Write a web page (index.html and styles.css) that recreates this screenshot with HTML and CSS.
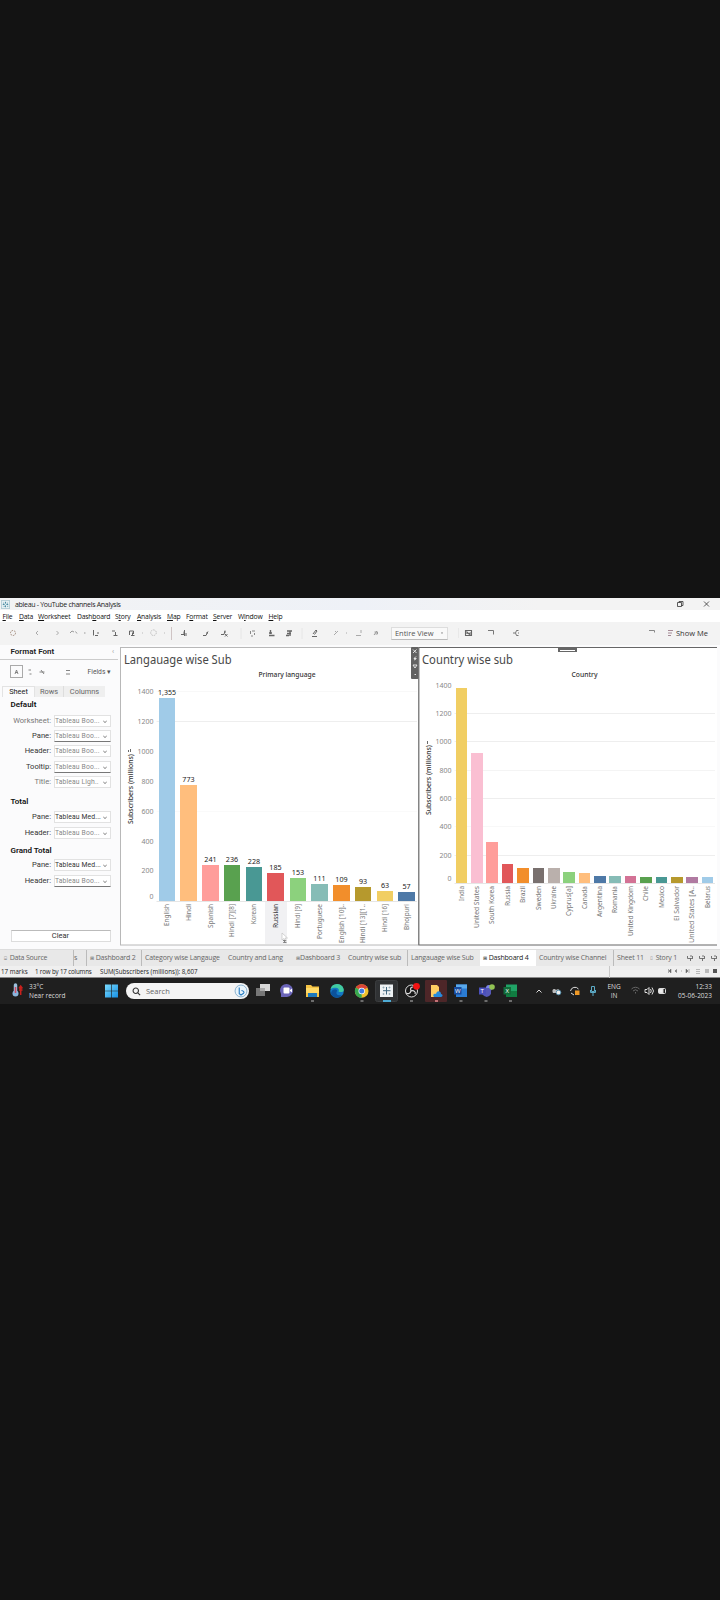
FILE: index.html
```html
<!DOCTYPE html>
<html lang="en">
<head>
<meta charset="utf-8">
<title>Tableau - YouTube channels Analysis</title>
<link rel="stylesheet" href="styles.css">
</head>
<body>
<main class="screen">
  <header class="titlebar">
    <svg class="logo" viewBox="0 0 10 10"><rect x=".5" y=".5" width="9" height="9" fill="#e6f0f3" stroke="#b4cdd5"/><path d="M5 2v2M5 6v2M2 5h2M6 5h2M3 3v1M7 3v1M3 7h1M7 7h1" stroke="#357f98"/></svg>
    <span class="app-name">ableau - YouTube channels Analysis</span>
    <svg class="window-buttons" viewBox="660 598 60 12" fill="none" stroke="#333" stroke-width=".8"><path d="M677.5 602.5h4v4h-4zM679 602.5v-1h4v4h-1.500M704 601.500l5 5M709 601.500l-5 5"/></svg>
  </header>
  <nav class="menu">
    <span><u>F</u>ile</span><span><u>D</u>ata</span><span><u>W</u>orksheet</span><span>Dash<u>b</u>oard</span><span>S<u>t</u>ory</span><span><u>A</u>nalysis</span><span><u>M</u>ap</span><span>F<u>o</u>rmat</span><span><u>S</u>erver</span><span>W<u>i</u>ndow</span><span><u>H</u>elp</span>
  </nav>
  <div class="toolbar">
    <svg class="tools" viewBox="0 622 391 23" fill="none" stroke="#666" stroke-width="1">
      <g stroke="#a08878" stroke-dasharray="1.500 1"><circle cx="13" cy="633" r="2.500"/></g>
      <path stroke="#aaa" d="M38 631l-2 2 2 2M56.500 631l2 2-2 2"/>
      <path stroke="#999" d="M70 633l2-2 2 1M75.500 631.500l1.500 2M84 633h1.500"/>
      <path d="M93.500 630v5.500M95 635.500h3M98 632v2M112 631h3M115.500 632v3M113.500 635.500h4M129.500 635v-4h4v3M131 635.500h3.500M132.500 632.500v2.500"/>
      <g stroke="#bbb" stroke-dasharray="1.500 1"><circle cx="153.500" cy="632.700" r="2.800"/></g>
      <path stroke="#bbb" d="M142 633h1M164 633h1"/>
      <path stroke="#cfc4c4" d="M171.500 627v13"/>
      <path d="M181 634.500h3v-3M184.500 630v6M186 633v3M203 635.500h3l2-4M206 633h2M221 634.500h3l1-4M225 631v2M225 634l2.500 2.500M227.500 634l-2.500 2.500"/>
      <path stroke="#888" d="M250.500 631v3M252 631h3M254.500 633v2M251 636h2"/>
      <path stroke-width="1.400" d="M269 635.500h5.500M269 633h3M270.500 630v4M287 631h5M287 633.500h4M286 635.500h3M290 631v5"/>
      <path stroke="#e6e6e6" d="M241 628v11M302 628v11"/>
      <path d="M313 634l3-4 1 1-2.500 3.500M312 636.500h5"/>
      <path stroke="#aaa" d="M334 635l4-4M335 631l2 2M346 633h1M361 630v3M356 635.500h5"/>
      <path stroke="#999" d="M374 635l3-4M374.500 632h3v2h-2"/>
    </svg>
    <span class="view-select">Entire View<svg viewBox="0 0 4 3"><path d="M1 .5h2L2 2z" fill="#777"/></svg></span>
    <svg class="tools-end" viewBox="449 622 80 23" fill="none" stroke="#666"><path stroke="#e8e8e8" d="M458.500 628v10"/><path d="M465.500 630.500h6v5h-6zM467 634v-2l2 2 1-1v2" stroke-width="1.100"/><path stroke="#777" d="M488 630.500h5.500v4"/><path d="M513 633h2M518.500 630.500h-2l-1 2.500 1 2.500h2M518 633h1" stroke-width=".9"/></svg>
    <svg class="showme-icons" viewBox="645 622 30 23" fill="none" stroke="#888"><path d="M649 630.500h5.500v2"/><path stroke="#a58a96" d="M668 630.500h5M668 633h4M668 635.500h3"/></svg>
    <span class="showme">Show Me</span>
  </div>
  <section class="workspace">
    <aside class="format">
      <h2><span>Format Font</span><i>‹</i></h2>
      <div class="font-tools">
        <svg viewBox="0 660 80 26" fill="none" stroke="#777"><rect x="10.500" y="665.500" width="12" height="12" stroke="#aaa"/><path d="M15 674l1.500-4 1.500 4M15.500 672.500h2M28.500 670h2.500M29.500 674h2M39.500 672h5M41 670l3 4M66 670.500h4M66 674h4" stroke-width=".9"/></svg>
        <span>Fields ▾</span>
      </div>
      <div class="pane-tabs"><b>Sheet</b><span>Rows</span><span>Columns</span></div>
      <div class="group first"><h3>Default</h3>
        <label class="pale">Worksheet:<em>Tableau Boo...</em></label>
        <label class="lined">Pane:<em>Tableau Boo...</em></label>
        <label>Header:<em>Tableau Boo...</em></label>
        <label class="lined">Tooltip:<em>Tableau Boo...</em></label>
        <label class="pale">Title:<em>Tableau Ligh..</em></label>
      </div>
      <div class="group total"><h3>Total</h3>
        <label class="set">Pane:<em>Tableau Med...</em></label>
        <label>Header:<em>Tableau Boo...</em></label>
      </div>
      <div class="group grand"><h3>Grand Total</h3>
        <label class="set">Pane:<em>Tableau Med...</em></label>
        <label class="lined">Header:<em>Tableau Boo...</em></label>
      </div>
      <button class="clear">Clear</button>
    </aside>
    <svg class="chart language" id="language" viewBox="119 645 299 303"></svg>
    <svg class="chart country" id="country" viewBox="418 645 302 303"></svg>
    <svg class="handle" viewBox="0 0 8 32" fill="none" stroke="#eee" stroke-width=".9"><rect width="7.500" height="32" rx="1" fill="#626262" stroke="none"/><path d="M2 2.500l3.500 3.500M5.500 2.500L2 6M5 9.500l-2 2h2.500M3 13l2-1M2 18h4l-2 3zM3.500 27.500h1.500"/></svg>
  </section>
  <nav class="sheets">
    <span class="t1"><i>⌸</i> Data Source</span><span class="t2">s</span><span class="t3"><i>⊞</i> Dashboard 2</span><span class="t4">Category wise Langauge</span><span class="t5">Country and Lang</span><span class="t6"><i>⊞</i>Dashboard 3</span><span class="t7">Country wise sub</span><span class="t8">Langauage wise Sub</span><span class="t9"><i>⊞</i> Dashboard 4</span><span class="t10">Country wise Channel</span><span class="t11">Sheet 11</span><span class="t12"><i>⌷</i> Story 1</span>
    <svg viewBox="684 949 36 17" fill="none" stroke="#666"><path d="M687.500 955v2.500h4.500M690 955h2M690.500 957v3M692.500 955v3M699.500 955v2.500h4.500M702 955h2M702.500 957v3M704.500 955v3M711.500 955v2.500h4.500M714 955h2M714.500 957v3M716.500 955v3" stroke-width=".9"/></svg>
  </nav>
  <div class="status">
    <span>17 marks</span><span>1 row by 17 columns</span><span>SUM(Subscribers (millions)): 8,607</span>
    <svg viewBox="608 966 112 12"><path d="M609.500 966v12" stroke="#c8c8c8"/><path d="M668.500 969v4M671 969v4l-2-2zM676.500 969.500v3l-1.500-1.500zM681 971h1M686 969v4l2-2zM689 969v4" fill="#666" stroke="#666" stroke-width=".5"/><path d="M696 969.500h4M696 971.500h4M696 973.500h4" stroke="#aaa" stroke-width=".8"/><path d="M705 969h4v4h-4z" fill="#bbb"/><path d="M713 969h4v4h-4z" fill="#555"/></svg>
  </div>
  <footer class="taskbar">
    <svg class="weather-icon" viewBox="0 978 28 26"><path d="M15.500 985v8" stroke="#9dc0dd" stroke-width="3.500" stroke-linecap="round"/><circle cx="15.500" cy="993.500" r="3" fill="#8ab4dc"/><path d="M15.500 987v6" stroke="#d24b62" stroke-width="1.500"/><path d="M20.700 995v-8M19 988.500l1.700-2.500 1.700 2.500M19 990h3.500" stroke="#c9201c" stroke-width="1.500" fill="none"/></svg>
    <div class="weather"><span>33°C</span><span>Near record</span></div>
    <svg class="start" viewBox="0 0 14 14"><defs><linearGradient id="win" x2="1" y2="1"><stop stop-color="#7bdcff"/><stop offset="1" stop-color="#1690e4"/></linearGradient></defs><path d="M0 0h6.600v6.600H0zM7.300 0h6.700v6.600H7.300zM0 7.300h6.600V14H0zM7.300 7.300H14V14H7.300z" fill="url(#win)"/></svg>
    <div class="search"><svg viewBox="0 0 10 10" fill="none" stroke="#333" stroke-width="1.200"><circle cx="4.200" cy="4.200" r="3"/><path d="M6.500 6.500L9 9"/></svg><span>Search</span>
      <svg class="bing" viewBox="0 0 16 16"><circle cx="8" cy="8" r="6.800" fill="#e9f4fb" stroke="#7da9c9"/><path d="M6 4v7l2 1.500 3-2c1-1 0-2.500-2.500-3" fill="none" stroke="#2b7fc4" stroke-width="1.300"/></svg></div>
    <svg class="apps" viewBox="250 978 278 26">
      <path d="M260 984h10v7h-10z" fill="#d8d8d8"/><path d="M256 988h9v8h-9z" fill="#777"/><path d="M260 988h5v3h-5z" fill="#aaa"/>
      <path d="M281 997v-3a6.500 6.500 0 1 1 6 3z" fill="#6a64b8"/><rect x="283.500" y="987.500" width="6" height="6" rx="1" fill="#fff"/><path d="M290 990l2-1.500v4l-2-1.500z" fill="#fff"/>
      <path d="M306 985h5l1.500 1.500h6.500V997h-13z" fill="#f5c344"/><path d="M306 988h13v5h-13z" fill="#ffda68"/><path d="M308 993h9v4h-9z" fill="#1b78bd"/>
      <circle cx="337" cy="991" r="6.800" fill="#1479c5"/><path d="M330.500 989a6.800 6.800 0 0 1 13-.5c1.500 4-3 4-5 3 2-4-4-5-8-2.500z" fill="#42cba0"/><path d="M331 993c1-5 7-4 6-2-2 4 2 5 5 4-4 5-11 2-11-2z" fill="#0c529b"/>
      <circle cx="361.700" cy="991" r="6.800" fill="#efc12e"/><path d="M361.700 991l-5.900-3.400a6.800 6.800 0 0 1 11.800 0z" fill="#d94436"/><path d="M361.700 991l0 6.800a6.800 6.800 0 0 1-5.900-10.200z" fill="#36a852"/><circle cx="361.700" cy="991" r="3.200" fill="#fff"/><circle cx="361.700" cy="991" r="2.500" fill="#3e7be0"/>
      <rect x="375.500" y="980.500" width="22" height="21" rx="2" fill="#303234" stroke="#3b3d3f"/><path d="M380 984.500h13v12.500h-13z" fill="#eef2f4"/><path d="M386.500 987v7.500M383 990.700h7.500" stroke="#406880" stroke-width="1"/><path d="M383.500 986.500v2M382.500 987.500h2M389.500 986.500v2M388.500 987.500h2M383.500 993v2M382.500 994h2M389.500 993v2M388.500 994h2" stroke="#8ba3b0" stroke-width=".7"/>
      <circle cx="411.500" cy="991" r="6" fill="#181818" stroke="#ddd"/><path d="M411 991c-1-3 0-4 2-4M411 991c3-1 5 1 4 3M411 991c-1 3-3 3-5 2" stroke="#ddd" fill="none" stroke-width="1.200"/><circle cx="416.500" cy="986.300" r="3.400" fill="#f31313"/>
      <rect x="425" y="980" width="22" height="22" rx="1" fill="#4d2628"/><path d="M431 985h6l2 2v10h-8z" fill="#ffce62"/><path d="M434 997c-2-3 1-4 2-3 1-4 5-3 5 0 2 0 2 3 0 3z" fill="#268bdd"/>
      <path d="M456 984.500h11V997h-11z" fill="#2b7cd3"/><path d="M456 984.500h11v4h-11z" fill="#58a9ec"/><rect x="454" y="987" width="7.500" height="7.500" fill="#174b9e"/><text x="455" y="993" font-size="6" fill="#fff" font-family="Open Sans">W</text>
      <circle cx="489" cy="988" r="3" fill="#7b83eb"/><path d="M482 988h9v6q-4 6-9 0z" fill="#5558b7"/><rect x="479" y="987.500" width="7" height="7" fill="#4b50bd"/><text x="480.500" y="993.200" font-size="6" fill="#fff" font-family="Open Sans">T</text><circle cx="492" cy="987" r="2.800" fill="#92c353"/>
      <path d="M506 984.500h11V997h-11z" fill="#20a366"/><path d="M506 991h11v6h-11z" fill="#107c41"/><rect x="503.500" y="987" width="7.500" height="7.500" fill="#116d3a"/><text x="505.500" y="993" font-size="6" fill="#fff" font-family="Open Sans">X</text>
      <path d="M311 1001h3M360.500 1001h3M410 1001h3M459.500 1001h3M484.500 1001h3M509 1001h3" stroke="#888" stroke-width="1.500"/><path d="M383 1001h8" stroke="#52b9e8" stroke-width="1.800"/><path d="M435 1001h3" stroke="#eb8b90" stroke-width="1.500"/>
    </svg>
    <svg class="tray" viewBox="528 978 76 26" fill="none" stroke="#ddd" stroke-width="1"><path d="M536.500 992.500l2.500-2.500 2.500 2.500"/><path d="M553 993c-2-4 2-5 3-3 2-2 5 0 4 3z" fill="#bbb" stroke="none"/><circle cx="558.500" cy="992.500" r="2.300" fill="#eee" stroke="#578fac"/><path d="M570.500 991a4.500 4.500 0 0 1 8-2M571 993l3 2"/><rect x="575" y="990.500" width="4.500" height="4.500" fill="#ee9927" stroke="none"/><path d="M591.500 986.500h3v5h-3zM590.500 990v2.500h5V990M593 993v3" stroke="#5cabc6"/></svg>
    <div class="lang"><span>ENG</span><span>IN</span></div>
    <svg class="system" viewBox="628 978 44 26" fill="none" stroke="#ddd"><path stroke="#666" d="M631.500 989a5.500 5.500 0 0 1 8 0M633 991a3.500 3.500 0 0 1 5 0M635.500 993.500v-1.500"/><path d="M645 989.500h2l2-2v7l-2-2h-2zM650.500 989q1.500 2 0 4M652 987.500q3 3.500 0 7"/><rect x="658.500" y="988.500" width="7" height="5" rx="1"/><path d="M659 989h4v4h-4z" fill="#eee"/></svg>
    <div class="clock"><span>12:33</span><span>05-06-2023</span></div>
  </footer>
</main>
<script src="charts.js"></script>
</body>
</html>
```
FILE: styles.css
```css
* { box-sizing: border-box; }
body { margin: 0; background: #131313; font-family: "Open Sans", sans-serif; font-size: 7px; color: #222; }
.screen { width: 720px; height: 1600px; padding-top: 598px; display: flex; flex-direction: column; overflow: hidden; white-space: nowrap; }
.screen > * { flex: none; }
svg { display: block; flex: none; }

.titlebar { height: 12px; display: flex; align-items: center; background: linear-gradient(90deg, #f2f3f4, #eef1f7 50%, #f3f3f3 75%); padding-left: 1px; }
.logo { width: 9px; height: 9px; }
.app-name { margin-left: 5px; font-size: 7px; letter-spacing: -.3px; }
.window-buttons { width: 60px; height: 12px; margin-left: auto; }

.menu { height: 12px; background: #fff; display: grid; grid-template-columns: 16.500px 19px 39px 38px 22px 30px 19px 27px 25px 30.500px 20px; padding: 1px 0 0 2.500px; align-items: center; line-height: 12px; font-size: 6.800px; letter-spacing: -.2px; color: #111; }
.menu u { text-underline-offset: 1px; text-decoration-thickness: .5px; }

.toolbar { height: 23px; background: #f3f3f3; display: flex; align-items: center; }
.tools { width: 391px; height: 23px; }
.view-select { width: 57px; height: 13px; line-height: 10px; margin-bottom: 1px; border: 1px solid #ddd; border-bottom-color: #bbb; background: #f9f9f9; padding: 0 3px; display: flex; align-items: center; justify-content: space-between; font-size: 7.500px; color: #555; letter-spacing: -.05px; }
.view-select svg { width: 4px; height: 3px; }
.tools-end { width: 80px; height: 23px; margin-left: 1px; }
.showme-icons { width: 30px; height: 23px; margin-left: auto; }
.showme { width: 45px; font-size: 7.500px; color: #333; padding: 0 0 2px 1px; }

.workspace { height: 304px; display: flex; background: #fbfbfc; position: relative; }
.format { width: 119px; height: 304px; display: flex; flex-direction: column; font-family: Roboto, sans-serif; font-size: 7.600px; }
.format h2 { margin: 0; height: 15px; border-bottom: 1px solid #ccc; padding: 0 4px 0 10.500px; display: flex; justify-content: space-between; align-items: center; font-size: 8px; line-height: 14px; font-weight: 600; width: 118px; }
.format h2 i { font-style: normal; font-weight: 400; font-size: 7px; color: #999; }
.font-tools { height: 26px; display: flex; justify-content: space-between; padding-right: 8px; line-height: 24px; color: #555; font-size: 6.700px; }
.font-tools svg { width: 80px; height: 26px; }
.pane-tabs { height: 11px; display: flex; margin-left: 2px; color: #666; line-height: 11px; font-size: 7.400px; text-align: center; }
.pane-tabs b { width: 33px; font-weight: 400; color: #222; border: 1px solid #e3e3e3; border-bottom: 0; line-height: 9px; }
.pane-tabs span { width: 29px; background: #efefef; border-right: 1px solid #ddd; }
.pane-tabs span + span { width: 41px; border: 0; }
.format h3 { margin: 0 0 0 10.500px; font-size: 8px; line-height: 10px; height: 10px; font-weight: 600; color: #111; }
.group.first { margin-top: 3px; }
.group label:first-of-type { margin-top: 2px; }
.group.first label:first-of-type { margin-top: 3px; }
.group label { height: 15.400px; display: grid; grid-template-columns: 51px 57px; column-gap: 3px; align-items: center; text-align: right; color: #333; line-height: 10px; }
.group label em { height: 12px; border: 1px solid #e2e2e2; background: #fff; text-align: left; font-style: normal; color: #888; font-size: 6.800px; line-height: 11px; display: flex; justify-content: space-between; padding: 0 3px 0 0; letter-spacing: .12px; }
.group label em::after { content: ""; width: 3px; height: 3px; border: solid #888; border-width: 0 .7px .7px 0; transform: rotate(45deg) scale(.7); margin-top: 3px; }
.group .lined em { border-bottom-color: #777; }
.group .set em { color: #333; }
.group .pale { color: #777; }
.total { margin-top: 7.500px; }
.grand { margin-top: 5.500px; }
.clear { margin: 41.500px 0 0 10.500px; width: 100px; height: 12px; border: 1px solid #ddd; border-top-color: #bbb; background: #fff; padding: 0; font: 7.500px/10px Roboto, sans-serif; color: #333; }
.chart { height: 303px; font-family: "Noto Sans", sans-serif; }
.language { width: 299px; }
.country { width: 302px; }
.handle { position: absolute; left: 411px; top: 2px; width: 8px; height: 32px; }
.chart .title { font-size: 12px; fill: #484848; font-weight: 400; }
.chart .field { font-size: 6.800px; fill: #333; font-weight: 500; }
.chart .axis { font-size: 7px; fill: #888; }
.chart .member { font-size: 7px; fill: #777; }
.chart .mark { font-size: 7px; fill: #222; }

.sheets { height: 17px; display: flex; background: #e8e8e8; line-height: 17px; color: #666; font-size: 7px; letter-spacing: -.18px; border-top: 1px solid #ddd; }
.sheets span { flex: none; height: 16px; line-height: 16px; overflow: hidden; }
.sheets i { display: inline-block; width: 4px; font: 5px/8px "DejaVu Sans", sans-serif; }
.t1 { width: 73px; padding-left: 4px; }
.t2 { width: 13px; border-left: 1px solid #bbb; }
.t3 { width: 55px; border-left: 1px solid #bbb; padding-left: 3px; }
.t4 { width: 84px; border-left: 1px solid #bbb; padding-left: 3px; }
.t5 { width: 70px; padding-left: 3px; }
.t6 { width: 50px; padding-left: 1px; }
.t7 { width: 62px; padding-left: 3px; }
.t8 { width: 73px; border-left: 1px solid #bbb; padding-left: 3px; }
.t9 { width: 56px; background: #fff; color: #222; padding-left: 3px; }
.t10 { width: 77px; padding-left: 3px; }
.t11 { width: 35px; border-left: 1px solid #bbb; padding-left: 3px; }
.t12 { width: 36px; padding-left: 2px; }
.sheets svg { width: 36px; height: 17px; }
.status { height: 12px; display: flex; background: #efefef; color: #222; font-size: 6.200px; line-height: 11px; border-bottom: 1px solid #888; }
.status span:first-child { padding-left: 1px; width: 35px; }
.status span:nth-child(2) { width: 65px; letter-spacing: -.15px; }
.status svg { width: 112px; height: 12px; margin-left: auto; }

.taskbar { height: 26px; background: #1f1f1f; color: #ddd; display: flex; align-items: center; font-size: 6.500px; }
.taskbar div:not(.search) { display: flex; flex-direction: column; line-height: 9px; flex: none; }
.weather-icon { width: 28px; height: 26px; }
.weather { width: 77px; padding-left: 1px; }
.start { width: 13px; height: 14px; }
.search { width: 123px; height: 16px; margin-left: 8px; border-radius: 8px; background: #f4f4f4; display: flex; align-items: center; padding: 0 1px 0 6px; color: #666; font-size: 7.500px; }
.search > svg { width: 9px; height: 9px; }
.search span { margin-left: 5px; }
.search .bing { width: 14px; height: 14px; margin-left: auto; }
.apps { width: 278px; height: 26px; margin-left: 1px; }
.tray { width: 76px; height: 26px; }
.lang { width: 20px; text-align: center; }
.system { width: 44px; height: 26px; margin-left: 4px; }
.clock { width: 40px; text-align: right; }
```
FILE: charts.js
```js
const FONT_RISE = 2.5;

function text(cls, x, y, value, length, extra = "") {
  return `<text class="${cls}" x="${x}" y="${y}" textLength="${length}" lengthAdjust="spacingAndGlyphs" ${extra}>${value}</text>`;
}

function rotated(cls, x, bottom, value, length, extra = "") {
  return `<text class="${cls}" transform="translate(${x} ${bottom}) rotate(-90)" textLength="${length}" lengthAdjust="spacingAndGlyphs" ${extra}>${value}</text>`;
}

// Each bar: name, left, right, top, colour, bottom of its name, value label.
function draw(id, c) {
  let out = c.frame;
  for (const [value, y, line] of c.ticks) {
    if (line) out += `<path d="M${c.axisX + 3} ${y}H${c.right}" stroke="${line}"/>`;
    const w = String(value).length * 4;
    out += text("axis", c.axisX - w, y + FONT_RISE, value, w);
  }
  out += `<path d="M${c.axisX + 3} ${c.base + .5}H${c.right}" stroke="#e6e6e6"/>`;
  for (const [name, left, right, top, fill, bottom, label] of c.bars) {
    const mid = (left + right) / 2;
    out += `<rect x="${left}" y="${top}" width="${right - left}" height="${c.base - top}" fill="${fill}"/>`;
    out += rotated("member", mid + 2, bottom, name, bottom - c.base - 3, name === "Russian" ? 'style="fill:#333"' : "");
    if (label) {
      const w = label.length > 3 ? 18 : label.length * 4.1;
      out += text("mark", mid - w / 2, top - 3, label, w);
    }
  }
  document.getElementById(id).innerHTML = out + c.over;
}

draw("language", {
  axisX: 153.5, right: 417, base: 901,
  frame: `<rect x="120.500" y="647.500" width="300" height="297.500" fill="#fff" stroke="#b8b8b8"/>
    <rect x="265" y="902" width="22" height="42" fill="#f1f1f3"/>`
    + text("title", 124, 663.5, "Langauage wise Sub", 107.5)
    + text("field", 258.5, 677, "Primary language", 57)
    + rotated("field", 133, 824, "Subscribers (millions)", 70)
    + `<path d="M128.500 750v2M130.500 749v3" stroke="#444" stroke-width=".8"/>`,
  ticks: [[1400, 691.5, "#f8f8f8"], [1200, 721.5, "#eee"], [1000, 751.5], [800, 781.5], [600, 811.5, "#fafafa"], [400, 841.5], [200, 870.5], [0, 896]],
  bars: [
    ["English", 159, 175, 698, "#a0cbe8", 926, "1,355"],
    ["Hindi", 180, 197, 785, "#ffbe7d", 921, "773"],
    ["Spanish", 202, 219, 865, "#ff9d9a", 928, "241"],
    ["Hindi [7][8]", 224, 240, 865, "#59a14f", 937, "236"],
    ["Korean", 246, 262, 867, "#499894", 924, "228"],
    ["Russian", 267, 284, 873, "#e15759", 928, "185"],
    ["Hindi [9]", 290, 306, 878, "#8cd17d", 928, "153"],
    ["Portuguese", 311, 328, 884, "#86bcb6", 939, "111"],
    ["English [10]..", 333, 350, 885, "#f28e2b", 943, "109"],
    ["Hindi [13][1..", 355, 371, 887, "#b6992d", 943, "93"],
    ["Hindi [16]", 377, 393, 891, "#f1ce63", 932, "63"],
    ["Bhojpuri", 398, 415, 892, "#4e79a7", 930, "57"]
  ],
  over: `<path d="M282 933v7l2-1.500 1.500 3 1-.5-1.500-3h2.500z" fill="#fff" stroke="#bbb" stroke-width=".6"/><path d="M283 940.500h2.500l-2 2h3" fill="none" stroke="#555" stroke-width=".7"/>`
});

draw("country", {
  axisX: 451.5, right: 715, base: 883,
  frame: `<path d="M418.500 647h298.500v298H418.500z" fill="#fff"/><path d="M717 647.500H418.800v297.500H717" fill="none" stroke="#666" stroke-width="1.200"/>
    <rect x="558" y="647" width="19" height="5" fill="#666"/><path d="M560 650.500h15" stroke="#fff"/>`
    + text("title", 422, 663.5, "Country wise sub", 91)
    + text("field", 571.5, 677, "Country", 26)
    + rotated("field", 431, 815, "Subscribers (millions)", 70)
    + `<path d="M427.500 741v3" stroke="#444" stroke-width=".8"/>`,
  ticks: [[1400, 685.5], [1200, 713.5, "#eee"], [1000, 741.5, "#eee"], [800, 770.5, "#f4f4f4"], [600, 798.5, "#eee"], [400, 826.5, "#f8f8f8"], [200, 855.5, "#eee"], [0, 878.5]],
  bars: [
    ["India", 456, 467, 688, "#f1ce63", 901],
    ["United States", 471, 483, 753, "#fabfd2", 928],
    ["South Korea", 486, 498, 842, "#ff9d9a", 924],
    ["Russia", 502, 513, 864, "#e15759", 906],
    ["Brazil", 517, 529, 868, "#f28e2b", 903],
    ["Sweden", 533, 544, 868, "#79706e", 910],
    ["Ukraine", 548, 560, 868, "#bab0ac", 909],
    ["Cyprus[a]", 563, 575, 872, "#8cd17d", 916],
    ["Canada", 579, 590, 873, "#ffbe7d", 909],
    ["Argentina", 594, 606, 876, "#4e79a7", 917],
    ["Romania", 609, 621, 876, "#86bcb6", 913],
    ["United Kingdom", 625, 636, 876, "#d37295", 936],
    ["Chile", 640, 652, 877, "#59a14f", 901],
    ["Mexico", 656, 667, 877, "#499894", 908],
    ["El Salvador", 671, 683, 877, "#b6992d", 921],
    ["United States [A..", 686, 698, 877, "#b07aa1", 943],
    ["Belarus", 702, 713, 877, "#a0cbe8", 908]
  ],
  over: ""
});
```
